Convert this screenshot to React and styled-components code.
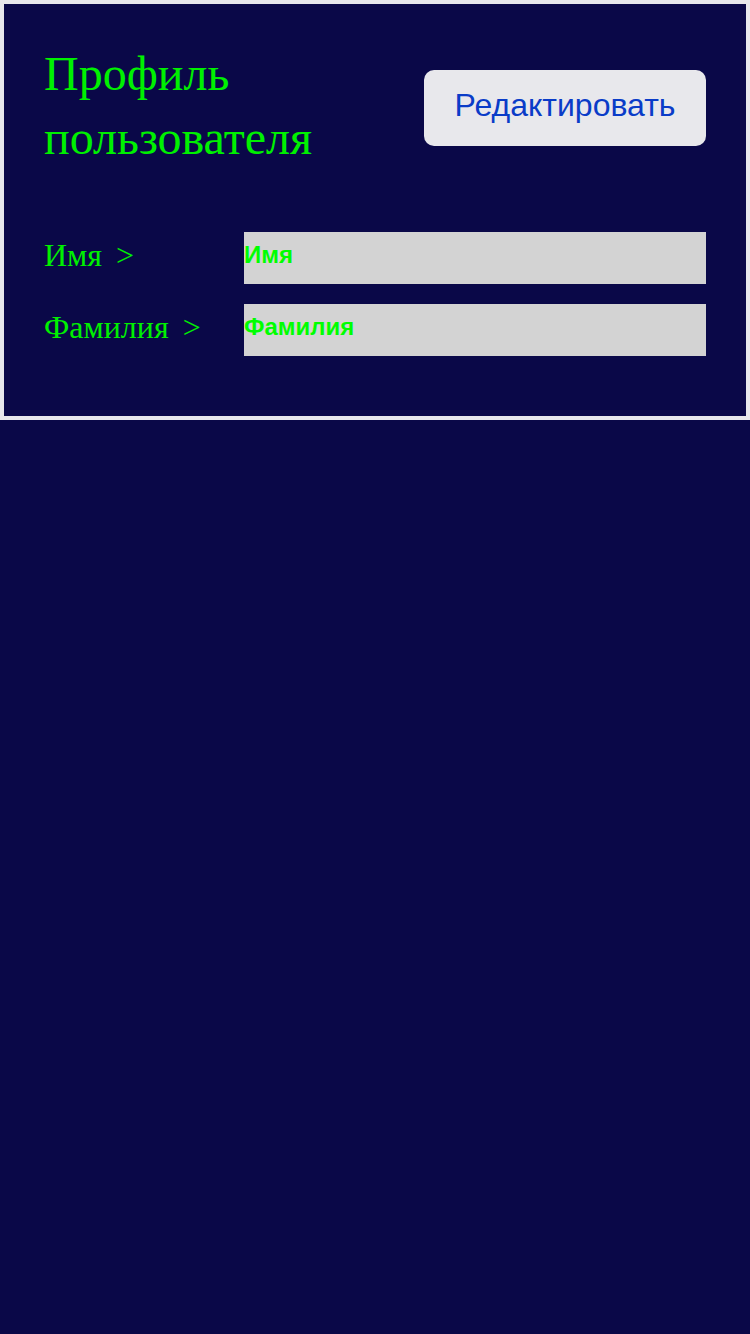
import React from 'react';
import styled, { createGlobalStyle } from 'styled-components';

const GlobalStyle = createGlobalStyle`
  html, body {
    margin: 0;
    padding: 0;
    background: #0a0848;
    min-height: 100%;
  }
  #root {
    min-height: 1334px;
    background: #0a0848;
  }
`;

function App() {
  return (
    <>
      <GlobalStyle />
      <Card>
        <Header>
          <Title>Профиль пользователя</Title>
          <EditButton type='button'>Редактировать</EditButton>
        </Header>
        <Fields>
          <Row>
            <Label>
              Имя <Arrow>&gt;</Arrow>
            </Label>
            <Field readOnly value='Имя' />
          </Row>
          <Row>
            <Label>
              Фамилия <Arrow>&gt;</Arrow>
            </Label>
            <Field readOnly value='Фамилия' />
          </Row>
        </Fields>
      </Card>
    </>
  );
}

export default App;

const Card = styled.div`
  box-sizing: border-box;
  width: 750px;
  height: 420px;
  border: 4px solid #e8e8ec;
  background: #0a0848;
  padding: 38px 40px 0 40px;
`;

const Header = styled.div`
  display: flex;
  align-items: center;
  justify-content: space-between;
  padding-bottom: 2px;
`;

const Title = styled.h1`
  margin: 0;
  width: 300px;
  font-family: 'Liberation Serif', serif;
  font-weight: 400;
  font-size: 48px;
  line-height: 64px;
  color: #00f000;
`;

const EditButton = styled.button`
  box-sizing: border-box;
  height: 76px;
  width: 282px;
  margin-top: 4px;
  border: none;
  border-radius: 10px;
  background: #e8e8ec;
  color: #0a3cc8;
  font-family: 'Liberation Sans', Arial, sans-serif;
  font-size: 32px;
  padding: 0 0 6px 0;
`;

const Fields = styled.div`
  display: flex;
  flex-direction: column;
  gap: 20px;
  margin-top: 60px;
`;

const Row = styled.div`
  display: flex;
  align-items: center;
`;

const Label = styled.div`
  width: 200px;
  flex-shrink: 0;
  padding-bottom: 6px;
  font-family: 'Liberation Serif', serif;
  font-size: 32px;
  color: #00f000;
`;

const Arrow = styled.span`
  margin-left: 6px;
`;

const Field = styled.input`
  box-sizing: border-box;
  flex: 1;
  height: 52px;
  border: none;
  outline: none;
  padding: 0 0 6px 0;
  margin: 0;
  background: #d3d3d3;
  color: #00ff00;
  font-family: 'Liberation Sans', Arial, sans-serif;
  font-weight: 700;
  font-size: 24px;
`;
